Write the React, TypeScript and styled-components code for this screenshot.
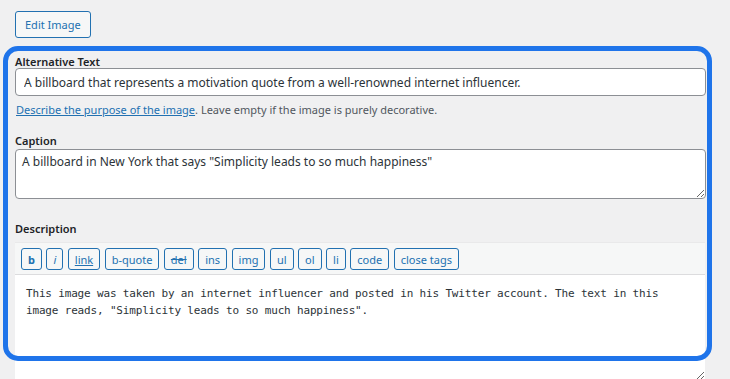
import styled, { createGlobalStyle } from 'styled-components';

const GlobalStyle = createGlobalStyle`
  html, body {
    margin: 0;
    padding: 0;
    background: #f0f0f1;
  }
  body {
    font-family: "Noto Sans", "Open Sans", sans-serif;
    color: #1d2327;
  }
`;

const Page = styled.div`
  position: relative;
  width: 730px;
  height: 379px;
  overflow: hidden;
  box-sizing: border-box;
  padding: 11px 24px 0 15px;
`;

const EditButton = styled.button`
  display: block;
  height: 27px;
  padding: 0 9px;
  font-family: inherit;
  font-size: 11px;
  color: #2271b1;
  background: #f6f7f7;
  border: 1px solid #2271b1;
  border-radius: 3px;
`;

const Fields = styled.div`
  display: flex;
  flex-direction: column;
`;

const Label = styled.label<{ gap: number }>`
  display: block;
  font-size: 11px;
  font-weight: 600;
  line-height: 12px;
  margin-top: ${(p) => p.gap}px;
`;

const TextInput = styled.input`
  box-sizing: border-box;
  width: 100%;
  height: 28px;
  padding: 0 8px;
  font-family: inherit;
  font-size: 12px;
  color: #2c3338;
  background: #fff;
  border: 1px solid #8c8f94;
  border-radius: 4px;
  outline: none;
`;

const Help = styled.p`
  margin: 7px 0 0 1px;
  font-size: 11px;
  line-height: 14px;
  color: #50575e;
`;

const HelpLink = styled.a`
  color: #2271b1;
  text-decoration: underline;
`;

const CaptionArea = styled.textarea`
  box-sizing: border-box;
  width: 100%;
  height: 50px;
  margin-top: 2px;
  padding: 3px 6px;
  font-family: inherit;
  font-size: 12px;
  line-height: 17px;
  color: #2c3338;
  background: #fff;
  border: 1px solid #8c8f94;
  border-radius: 4px;
  outline: none;
`;

const Editor = styled.div`
  width: 690px;
  margin-top: 7px;
  display: flex;
  flex-direction: column;
`;

const Toolbar = styled.div`
  display: flex;
  gap: 4.5px;
  padding: 5px 6px 4px 6px;
  background: #f6f7f7;
  border-top: 1px solid #e9e9ea;
  border-bottom: 1px solid #dcdcde;
`;

const TagButton = styled.button<{ kind?: 'b' | 'i' | 'link' | 'del' }>`
  height: 22px;
  padding: 0 6px;
  font-family: inherit;
  font-size: 11px;
  color: #2271b1;
  background: #f6f7f7;
  border: 1px solid #2271b1;
  border-radius: 3px;
  font-weight: ${(p) => (p.kind === 'b' ? 700 : 400)};
  font-style: ${(p) => (p.kind === 'i' ? 'italic' : 'normal')};
  text-decoration: ${(p) =>
    p.kind === 'link' ? 'underline' : p.kind === 'del' ? 'line-through' : 'none'};
`;

const ContentArea = styled.textarea`
  box-sizing: border-box;
  width: 100%;
  height: 105px;
  padding: 10px 18px 8px 11px;
  font-family: "DejaVu Sans Mono", "Liberation Mono", monospace;
  font-size: 11px;
  letter-spacing: -0.17px;
  line-height: 17px;
  color: #2c3338;
  background: #fff;
  border: none;
  outline: none;
`;

const Highlight = styled.div`
  position: absolute;
  left: 3px;
  top: 46px;
  width: 709px;
  height: 315px;
  box-sizing: border-box;
  border: 5px solid #1f74ea;
  border-radius: 15px;
  pointer-events: none;
`;

const tags: { label: string; kind?: 'b' | 'i' | 'link' | 'del' }[] = [
  { label: 'b', kind: 'b' },
  { label: 'i', kind: 'i' },
  { label: 'link', kind: 'link' },
  { label: 'b-quote' },
  { label: 'del', kind: 'del' },
  { label: 'ins' },
  { label: 'img' },
  { label: 'ul' },
  { label: 'ol' },
  { label: 'li' },
  { label: 'code' },
  { label: 'close tags' },
];

export default function App() {
  return (
    <>
      <GlobalStyle />
      <Page>
        <EditButton type="button">Edit Image</EditButton>
        <Fields>
          <Label gap={18}>Alternative Text</Label>
          <TextInput
            readOnly
            defaultValue="A billboard that represents a motivation quote from a well-renowned internet influencer."
          />
          <Help>
            <HelpLink href="#">Describe the purpose of the image</HelpLink>. Leave empty if the
            image is purely decorative.
          </Help>
          <Label gap={18}>Caption</Label>
          <CaptionArea
            readOnly
            defaultValue={'A billboard in New York that says "Simplicity leads to so much happiness"'}
          />
          <Label gap={24}>Description</Label>
          <Editor>
            <Toolbar>
              {tags.map((t) => (
                <TagButton key={t.label} type="button" kind={t.kind}>
                  {t.label}
                </TagButton>
              ))}
            </Toolbar>
            <ContentArea
              readOnly
              defaultValue={
                'This image was taken by an internet influencer and posted in his Twitter account. The text in this image reads, "Simplicity leads to so much happiness".'
              }
            />
          </Editor>
        </Fields>
        <Highlight />
      </Page>
    </>
  );
}
